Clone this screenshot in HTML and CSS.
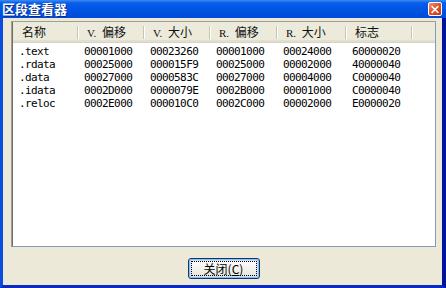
FILE: index.html
```html
<!DOCTYPE html>
<html lang="zh-CN">
<head>
  <meta charset="UTF-8">
  <title>区段查看器</title>
  <link rel="stylesheet" href="styles.css">
</head>
<body>
  <div class="window">
    <div class="titlebar">
      <span class="title">区段查看器</span>
      <span class="close">
        <svg width="13" height="13" viewBox="0 0 13 13">
          <path d="M3.5 3.5 L9.5 9.5 M9.5 3.5 L3.5 9.5" stroke="#fff" stroke-width="1.8" stroke-linecap="square"/>
        </svg>
      </span>
    </div>

    <div class="client">
      <div class="listview">
        <div class="header">
          <div class="hcell">名称</div>
          <div class="hcell"><span class="ab">V.</span> 偏移</div>
          <div class="hcell"><span class="ab">V.</span> 大小</div>
          <div class="hcell"><span class="ab">R.</span> 偏移</div>
          <div class="hcell"><span class="ab">R.</span> 大小</div>
          <div class="hcell">标志</div>
          <div class="hcell rest"></div>
        </div>
        <div class="rows">
          <div class="row">
            <span>.text</span><span>00001000</span><span>00023260</span><span>00001000</span><span>00024000</span><span>60000020</span>
          </div>
          <div class="row">
            <span>.rdata</span><span>00025000</span><span>000015F9</span><span>00025000</span><span>00002000</span><span>40000040</span>
          </div>
          <div class="row">
            <span>.data</span><span>00027000</span><span>0000583C</span><span>00027000</span><span>00004000</span><span>C0000040</span>
          </div>
          <div class="row">
            <span>.idata</span><span>0002D000</span><span>0000079E</span><span>0002B000</span><span>00001000</span><span>C0000040</span>
          </div>
          <div class="row">
            <span>.reloc</span><span>0002E000</span><span>000010C0</span><span>0002C000</span><span>00002000</span><span>E0000020</span>
          </div>
        </div>
      </div>

      <div class="footer">
        <button class="btn"><span class="focus">关闭(<u>C</u>)</span></button>
      </div>
    </div>
  </div>
</body>
</html>
```

FILE: styles.css
```css
* {
  margin: 0;
  padding: 0;
  box-sizing: border-box;
}

body {
  width: 446px;
  height: 288px;
  overflow: hidden;
  font-family: "Noto Sans CJK SC", sans-serif;
  font-size: 12px;
  color: #000;
  background: #ece9d8;
}

.window {
  height: 288px;
  display: flex;
  flex-direction: column;
  border-left: 3px solid #0a4ee0;
  border-right: 4px solid #00139a;
  border-bottom: 3px solid #0a2bc0;
}

/* title bar */
.titlebar {
  height: 18px;
  margin: 0 -4px 0 -3px;
  padding: 0 4px 0 2px;
  display: flex;
  align-items: center;
  justify-content: space-between;
  background: linear-gradient(#3b8cf5 0, #0a5ce8 3px, #0056e6 45%, #004ad8 100%);
}

.title {
  color: #fff;
  font-weight: bold;
  font-size: 13px;
  line-height: 14px;
  text-shadow: 1px 1px 0 #0a2a8a;
}

.close {
  width: 14px;
  height: 14px;
  display: flex;
  align-items: center;
  justify-content: center;
  border: 1px solid #fff;
  border-radius: 2px;
  background: linear-gradient(135deg, #ef9476 0, #e0562e 45%, #c2370d 100%);
}

/* client area */
.client {
  flex: 1;
  display: flex;
  flex-direction: column;
  padding: 3px 6px 0 8px;
}

.listview {
  height: 226px;
  background: #fff;
  border: 1px solid #7f9db9;
  border-left-color: #a09e90;
  border-top-color: #a09e90;
  box-shadow: inset 1px 1px 0 #716f64;
}

.header {
  height: 21px;
  display: grid;
  grid-template-columns: 65px 66px 66px 67px 69px 66px 1fr;
  background: #ebeadb;
  border-bottom: 1px solid #d6d2c2;
  box-shadow: inset 0 -2px 0 #e2dfcf;
  margin-left: 1px;
}

.hcell {
  position: relative;
  line-height: 20px;
  padding-left: 9px;
  white-space: nowrap;
  color: #111;
}

.hcell::after {
  content: "";
  position: absolute;
  right: 0;
  top: 4px;
  height: 13px;
  width: 1px;
  background: #c7c5b2;
  box-shadow: 1px 0 0 #fff;
}

.hcell.rest::after {
  display: none;
}

.ab {
  font-family: "Liberation Serif", serif;
  font-size: 11px;
  margin-right: 3px;
}

.rows {
  padding-top: 2px;
  margin-left: 1px;
}

.row {
  height: 13px;
  display: grid;
  grid-template-columns: 65px 66px 66px 67px 69px 66px;
  font-family: "DejaVu Sans Mono", monospace;
  font-size: 11px;
  letter-spacing: -0.6px;
  line-height: 13px;
}

.row span {
  padding-left: 6px;
}

/* button row */
.footer {
  flex: 1;
  display: flex;
  justify-content: center;
  padding-top: 11px;
}

.btn {
  width: 72px;
  height: 21px;
  padding: 2px;
  border: 1px solid #003c74;
  border-radius: 3px;
  background: linear-gradient(#fff 0, #f4f3ee 50%, #e3e1d6 100%);
  box-shadow: inset 0 0 0 1px #9cb7e9, inset 0 0 0 2px #cfe0fb;
  font-family: "Noto Sans CJK SC", sans-serif;
  font-size: 12px;
  color: #000;
}

.focus {
  display: block;
  height: 100%;
  line-height: 14px;
  border: 1px dotted #000;
}

.btn u {
  text-decoration: underline;
}
```
